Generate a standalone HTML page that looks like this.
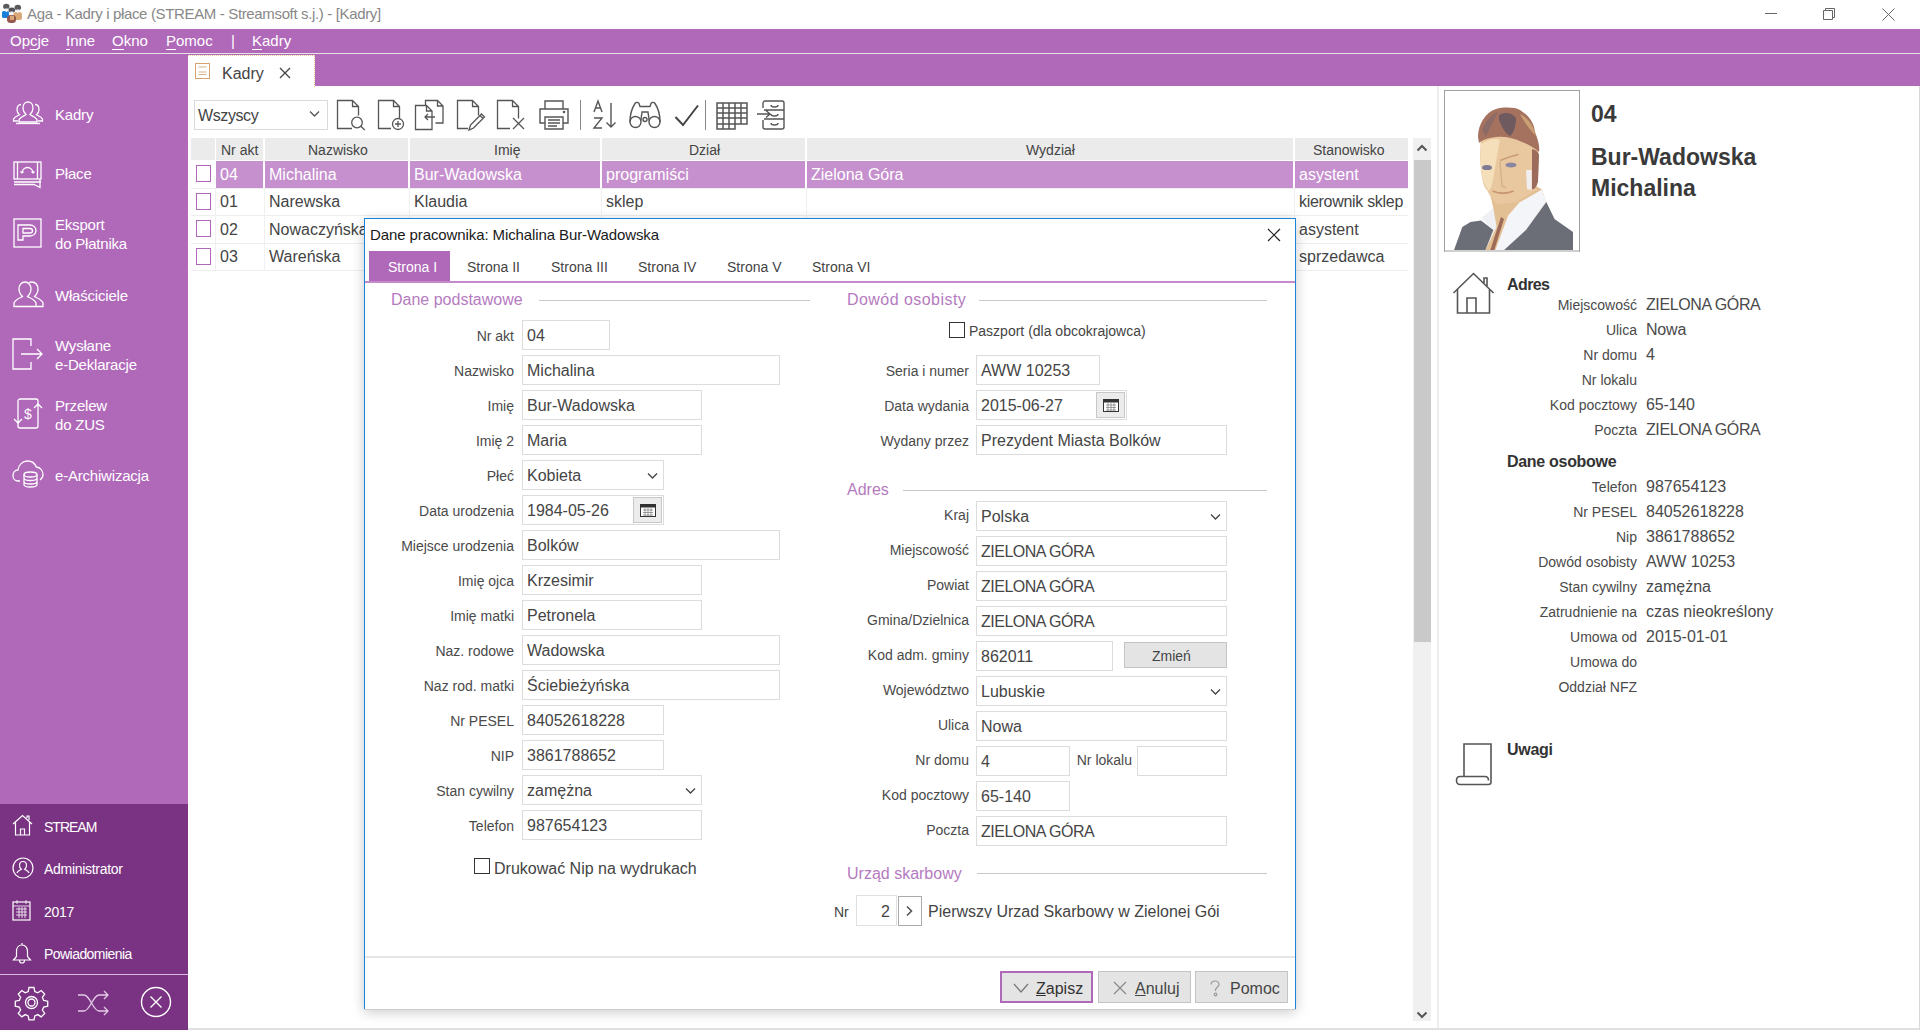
<!DOCTYPE html>
<html><head><meta charset="utf-8">
<style>
*{margin:0;padding:0;box-sizing:border-box}
html,body{width:1920px;height:1030px;overflow:hidden;background:#fff;font-family:"Liberation Sans",sans-serif;color:#333}
.a{position:absolute}
.t{position:absolute;white-space:nowrap;line-height:1}
#title{left:0;top:0;width:1920px;height:29px;background:#fff}
#menu{left:0;top:29px;width:1920px;height:24px;background:#b068b9}
#menuline{left:0;top:53px;width:1920px;height:1px;background:#e6e2e6}
#band{left:0;top:54px;width:1920px;height:32px;background:#b068b9}
#side{left:0;top:54px;width:188px;height:750px;background:#b068b9}
#side2{left:0;top:804px;width:188px;height:226px;background:#7a3383}
.mi{color:#fff;font-size:15px;top:33px}
.mi u{text-decoration:none;border-bottom:1px solid #fff}
.si{color:#fff;font-size:15px;letter-spacing:-0.2px}
.si2{color:#fff;font-size:14px;letter-spacing:-0.3px}
.ico{position:absolute;overflow:visible}
.hd{position:absolute;top:138px;height:22px;background:#ebebeb}
.ht{position:absolute;top:143px;font-size:14px;color:#444;white-space:nowrap;line-height:1}
.rt{position:absolute;font-size:16px;color:#444;white-space:nowrap;line-height:1}
.sel{color:#fff}
.cb{position:absolute;width:15px;height:17px;border:1.5px solid #b068b9;background:#fff}
.lbl{position:absolute;font-size:14px;color:#4a4a4a;white-space:nowrap;line-height:1;text-align:right}
.val{position:absolute;font-size:16px;color:#4a4a4a;white-space:nowrap;line-height:1}
.box{position:absolute;height:30px;border:1px solid #dcdcdc;background:#fff;font-size:16px;color:#454545;padding:7px 0 0 4px;white-space:nowrap;line-height:1;overflow:hidden}
.sec{position:absolute;font-size:16px;color:#b57bc0;white-space:nowrap;line-height:1}
.secl{position:absolute;height:1px;background:#c8c8c8}
.btn{position:absolute;height:30px;background:#e4e4e4;border:1px solid #c4c4c4;font-size:16px;color:#444;white-space:nowrap;line-height:1}
</style></head><body>

<!-- title bar -->
<div id="title" class="a"></div>
<svg class="ico" style="left:0px;top:0px" width="24" height="24" viewBox="0 0 24 24">
 <rect x="2" y="11" width="7" height="7" rx="1.5" fill="#1a7fd9"/>
 <ellipse cx="6.3" cy="6.5" rx="3.2" ry="2.8" fill="#5a5a5e"/>
 <path d="M5 8.5h3l-.8 3.5h-1.6z" fill="#eef0f4"/>
 <rect x="13.5" y="12" width="8.5" height="8" rx="2.5" fill="#dba877"/>
 <ellipse cx="17.8" cy="7.5" rx="3.3" ry="2.8" fill="#5a5a5e"/>
 <path d="M16.2 9.5h3.2l-1 3.5h-1.6z" fill="#eef0f4"/>
 <rect x="7" y="15" width="9" height="8" rx="3.5" fill="#94584f"/>
 <rect x="10" y="16" width="4" height="4" fill="#d9a877"/>
 <ellipse cx="11.8" cy="10" rx="3.3" ry="2.6" fill="#505055"/>
 <path d="M10.2 11.5h3.2l-1 3.8h-1.4z" fill="#eef0f4"/>
</svg>
<div class="t" style="left:27px;top:6px;font-size:15px;color:#888;letter-spacing:-0.35px">Aga - Kadry i płace (STREAM - Streamsoft s.j.) - [Kadry]</div>
<div class="a" style="left:1765px;top:13px;width:12px;height:1px;background:#666"></div>
<svg class="ico" style="left:1822px;top:7px" width="14" height="14" viewBox="0 0 14 14"><path d="M1.5 3.5h9v9h-9z M3.5 3.5v-2h9v9h-2" fill="none" stroke="#666" stroke-width="1"/></svg>
<svg class="ico" style="left:1882px;top:8px" width="13" height="13" viewBox="0 0 13 13"><path d="M0.5 0.5L12.5 12.5M12.5 0.5L0.5 12.5" stroke="#666" stroke-width="1"/></svg>

<!-- menu -->
<div id="menu" class="a"></div>
<div class="t mi" style="left:10px">Op<u>c</u>je</div>
<div class="t mi" style="left:66px"><u>I</u>nne</div>
<div class="t mi" style="left:112px"><u>O</u>kno</div>
<div class="t mi" style="left:166px"><u>P</u>omoc</div>
<div class="t mi" style="left:231px">|</div>
<div class="t mi" style="left:252px"><u>K</u>adry</div>
<div id="menuline" class="a"></div>
<div id="band" class="a"></div>
<div id="side" class="a"></div>
<div id="side2" class="a"></div>


<!-- sidebar items -->
<svg class="ico" style="left:12px;top:100px" width="32" height="27" viewBox="0 0 32 27" fill="none" stroke="#fff" stroke-width="1.3">
 <path d="M16 2c-3 0-5 2.5-5 6 0 3 1.5 5 3 6.5-1 1-6 2.5-7 5.5v2h18v-2c-1-3-6-4.5-7-5.5 1.5-1.5 3-3.5 3-6.5 0-3.5-2-6-5-6z"/>
 <path d="M9 4.5c-2.5 0-4 2-4 5 0 2.5 1 4 2.5 5.2-1 .8-5 2-6 4.3v2h4.5"/>
 <path d="M23 4.5c2.5 0 4 2 4 5 0 2.5-1 4-2.5 5.2 1 .8 5 2 6 4.3v2h-4.5"/>
 <path d="M4 23.5h24"/>
</svg>
<div class="t si" style="left:55px;top:107px">Kadry</div>

<svg class="ico" style="left:13px;top:161px" width="30" height="28" viewBox="0 0 30 28" fill="none" stroke="#fff" stroke-width="1.3">
 <rect x="1" y="1" width="27" height="17"/><path d="M4.5 1v17M24.5 1v17"/>
 <path d="M9 12c0-3 2.5-5.5 5.5-5.5S20 9 20 12M9 12l-1.5-1.5M9 12l1.5-1.5M20 12l-1.5-1.5M20 12l1.5-1.5"/>
 <path d="M1 21h27M1 23.5h20l6 3v-8"/>
</svg>
<div class="t si" style="left:55px;top:166px">Płace</div>

<svg class="ico" style="left:13px;top:218px" width="30" height="30" viewBox="0 0 30 30" fill="none" stroke="#fff" stroke-width="1.3">
 <rect x="1" y="1" width="27" height="28"/>
 <path d="M5 22V7h12c3.5 0 6 2.5 6 5.5s-2.5 5.5-6 5.5h-7v4z M10 10.5v4.5h7c1.5 0 2.5-1 2.5-2.25s-1-2.25-2.5-2.25z"/>
</svg>
<div class="t si" style="left:55px;top:217px">Eksport</div>
<div class="t si" style="left:55px;top:236px">do Płatnika</div>

<svg class="ico" style="left:12px;top:280px" width="32" height="29" viewBox="0 0 32 29" fill="none" stroke="#fff" stroke-width="1.3">
 <path d="M13 2c-3.5 0-6 3-6 7 0 3.5 1.8 6 3.5 7.5-1.2 1-7.5 3-8.5 6.5v3.5h22v-3.5c-1-3.5-7.3-5.5-8.5-6.5 1.7-1.5 3.5-4 3.5-7.5 0-4-2.5-7-6-7z"/>
 <path d="M17 2.5c1-.4 2-.5 3-.5 3.5 0 6 3 6 7 0 3.5-1.8 6-3.5 7.5 1.2 1 7.5 3 8.5 6.5v3.5h-7"/>
</svg>
<div class="t si" style="left:55px;top:288px">Właściciele</div>

<svg class="ico" style="left:12px;top:338px" width="32" height="32" viewBox="0 0 32 32" fill="none" stroke="#fff" stroke-width="1.3">
 <path d="M19 8V1H1v30h18v-7"/><path d="M9 16h21M25 11l5 5-5 5"/>
</svg>
<div class="t si" style="left:55px;top:338px">Wysłane</div>
<div class="t si" style="left:55px;top:357px">e-Deklaracje</div>

<svg class="ico" style="left:12px;top:398px" width="32" height="31" viewBox="0 0 32 31" fill="none" stroke="#fff" stroke-width="1.3">
 <path d="M6 10V3c0-1 1-2 2-2h16c1 0 2 1 2 2v3M26 21v7c0 1-1 2-2 2H8c-1 0-2-1-2-2v-3"/>
 <path d="M6 10v15M2 21l4 4 4-4M26 6v15M22 10l4-4 4 4"/>
 <text x="16" y="21" font-size="14" fill="#fff" stroke="none" text-anchor="middle" font-family="Liberation Sans">$</text>
</svg>
<div class="t si" style="left:55px;top:398px">Przelew</div>
<div class="t si" style="left:55px;top:417px">do ZUS</div>

<svg class="ico" style="left:12px;top:460px" width="32" height="28" viewBox="0 0 32 28" fill="none" stroke="#fff" stroke-width="1.3">
 <path d="M8 21H6c-3 0-5-2.5-5-5.5S3 10 6 10c.5-5 4.5-9 9.5-9 4 0 7.5 2.5 8.8 6 3.8.3 6.7 3.5 6.7 7.3 0 2.5-1.2 4.5-3 5.7"/>
 <ellipse cx="18.5" cy="14.5" rx="6.5" ry="2.5"/><path d="M12 14.5v10c0 1.5 3 2.5 6.5 2.5s6.5-1 6.5-2.5v-10M12 18c0 1.5 3 2.5 6.5 2.5S25 19.5 25 18M12 21.5c0 1.5 3 2.5 6.5 2.5s6.5-1 6.5-2.5"/>
</svg>
<div class="t si" style="left:55px;top:468px">e-Archiwizacja</div>

<!-- bottom -->
<svg class="ico" style="left:12px;top:814px" width="22" height="22" viewBox="0 0 22 22" fill="none" stroke="#fff" stroke-width="1.2">
 <path d="M1 10L10.5 1.5 20 10M3.5 8v13h14V8M8.5 21v-6h4v6M15 4V2h2v4"/>
</svg>
<div class="t si2" style="left:44px;top:820px;letter-spacing:-1px">STREAM</div>
<svg class="ico" style="left:12px;top:857px" width="22" height="22" viewBox="0 0 22 22" fill="none" stroke="#fff" stroke-width="1.2">
 <circle cx="11" cy="11" r="10"/><path d="M11 4.5c-2.2 0-3.5 1.8-3.5 4 0 1.8.8 3 1.8 3.8-.8.6-3.8 1.6-4.3 3.7M11 4.5c2.2 0 3.5 1.8 3.5 4 0 1.8-.8 3-1.8 3.8.8.6 3.8 1.6 4.3 3.7"/>
</svg>
<div class="t si2" style="left:44px;top:862px">Administrator</div>
<svg class="ico" style="left:12px;top:899px" width="20" height="22" viewBox="0 0 20 22" fill="none" stroke="#fff" stroke-width="1.2">
 <rect x="1" y="3" width="17" height="18"/><path d="M1 7h17M5 1v4M14 1v4M4 10h11M4 13h11M4 16h11M7 8v11M10 8v11M13 8v11" stroke-width=".8"/>
</svg>
<div class="t si2" style="left:44px;top:905px">2017</div>
<svg class="ico" style="left:12px;top:942px" width="20" height="22" viewBox="0 0 20 22" fill="none" stroke="#fff" stroke-width="1.2">
 <path d="M10 1v2M10 3c-3.5 0-5.5 3-5.5 6.5v5L1.5 18h17l-3-3.5v-5C15.5 6 13.5 3 10 3zM7.5 18.5c0 1.5 1 2.5 2.5 2.5s2.5-1 2.5-2.5"/>
</svg>
<div class="t si2" style="left:44px;top:947px;letter-spacing:-0.55px">Powiadomienia</div>
<div class="a" style="left:0;top:974px;width:188px;height:1px;background:#d8bcdc"></div>
<svg class="ico" style="left:15px;top:986px" width="33" height="33" viewBox="0 0 33 33" fill="none" stroke="#fff" stroke-width="1.3">
 <path d="M14 1.5h5l.8 4 3 1.3 3.4-2.3 3.5 3.5-2.3 3.4 1.3 3 4 .8v5l-4 .8-1.3 3 2.3 3.4-3.5 3.5-3.4-2.3-3 1.3-.8 4h-5l-.8-4-3-1.3-3.4 2.3-3.5-3.5 2.3-3.4-1.3-3-4-.8v-5l4-.8 1.3-3-2.3-3.4 3.5-3.5 3.4 2.3 3-1.3z"/>
 <circle cx="16.5" cy="16.5" r="6"/><circle cx="16.5" cy="16.5" r="3.5"/>
</svg>
<svg class="ico" style="left:77px;top:988px" width="33" height="30" viewBox="0 0 33 30" fill="none" stroke="#e3cbe6" stroke-width="1.3">
 <path d="M1 7h6c6 0 9 16 15 16h9M1 23h6c6 0 9-16 15-16h9M27 3l4 4-4 4M27 19l4 4-4 4"/>
</svg>
<svg class="ico" style="left:140px;top:986px" width="32" height="32" viewBox="0 0 32 32" fill="none" stroke="#fff" stroke-width="1.4">
 <circle cx="16" cy="16" r="14.5"/><path d="M10.5 10.5l11 11M21.5 10.5l-11 11"/>
</svg>

<!-- content white -->
<div class="a" style="left:188px;top:86px;width:1732px;height:944px;background:#fff"></div>

<!-- tab -->
<div class="a" style="left:188px;top:55px;width:127px;height:32px;background:#fff;border-top:1px dotted #f0c890;border-right:1px dotted #f0c890"></div>
<svg class="ico" style="left:195px;top:63px" width="16" height="17" viewBox="0 0 16 17"><rect x="0.5" y="0.5" width="14" height="15" fill="#fff" stroke="#d9a070"/><path d="M3.5 4h8M3.5 9h8M3.5 11.5h8" stroke="#d9b38a" stroke-width="1"/></svg>
<div class="t" style="left:222px;top:65.5px;font-size:16px;color:#444">Kadry</div>
<svg class="ico" style="left:279px;top:67px" width="12" height="12" viewBox="0 0 12 12"><path d="M1 1L11 11M11 1L1 11" stroke="#444" stroke-width="1.3"/></svg>


<!-- toolbar -->
<div class="box" style="left:194px;top:100px;width:134px;height:30px;border-color:#dadada;padding-top:7px;padding-left:3px;color:#444;letter-spacing:-0.4px">Wszyscy</div>
<svg class="ico" style="left:309px;top:110px" width="11" height="8" viewBox="0 0 11 8"><path d="M1 1.5l4.5 4.5 4.5-4.5" fill="none" stroke="#555" stroke-width="1.3"/></svg>
<svg class="ico" style="left:336px;top:99px" width="36" height="32" viewBox="0 0 36 32" fill="none" stroke="#555" stroke-width="1.3">
 <path d="M16 29.5H1.5V1.5h15l6 6v9M16.5 1.5v6h6"/><circle cx="21" cy="23.5" r="5.3"/><path d="M24.8 27.3l4 3.7"/>
</svg>
<svg class="ico" style="left:377px;top:99px" width="32" height="32" viewBox="0 0 32 32" fill="none" stroke="#555" stroke-width="1.3">
 <path d="M14 29.5H1.5V1.5h15l6 6v12M16.5 1.5v6h6"/><circle cx="21" cy="25" r="5.5"/><path d="M21 22v6M18 25h6"/>
</svg>
<svg class="ico" style="left:414px;top:99px" width="32" height="32" viewBox="0 0 32 32" fill="none" stroke="#555" stroke-width="1.3">
 <path d="M11.5 7V1.5h12l5.5 5.5v17h-7.5M23.5 1.5V7H29"/><path d="M1.5 6.5h11l5.5 5.5v18.5H1.5z M12.5 6.5V12H18"/><path d="M11 18h10M14 15l-3 3 3 3"/>
</svg>
<svg class="ico" style="left:456px;top:99px" width="32" height="32" viewBox="0 0 32 32" fill="none" stroke="#555" stroke-width="1.3">
 <path d="M12 29.5H1.5V1.5h15l6 6v9M16.5 1.5v6h6"/><path d="M13 31l1.5-5 11-11 3 3-11 11z M24 16.5l3 3"/>
</svg>
<svg class="ico" style="left:496px;top:99px" width="32" height="32" viewBox="0 0 32 32" fill="none" stroke="#555" stroke-width="1.3">
 <path d="M14 29.5H1.5V1.5h15l6 6v12M16.5 1.5v6h6"/><path d="M17 19l11 11M28 19L17 30"/>
</svg>
<svg class="ico" style="left:538px;top:99px" width="32" height="32" viewBox="0 0 32 32" fill="none" stroke="#555" stroke-width="1.4">
 <path d="M7 10V2h18v8M7 24H2V10h28v14h-5"/><path d="M7 18h18v12H7z M10 21h12M10 24h12M10 27h9"/><circle cx="26" cy="13" r=".6" fill="#555"/>
</svg>
<div class="a" style="left:580px;top:100px;width:1px;height:30px;background:#888"></div>
<svg class="ico" style="left:592px;top:99px" width="30" height="32" viewBox="0 0 30 32" fill="none" stroke="#555" stroke-width="1.4">
 <path d="M2 13L6 2l4 11M3.5 9h5M2 19h8L2 29h8"/><path d="M19 4v24M14.5 23.5L19 28l4.5-4.5"/>
</svg>
<svg class="ico" style="left:629px;top:100px" width="32" height="30" viewBox="0 0 32 30" fill="none" stroke="#555" stroke-width="1.4">
 <circle cx="6.5" cy="22" r="5.5"/><circle cx="25.5" cy="22" r="5.5"/><circle cx="16" cy="19.5" r="2"/>
 <path d="M1 22C1 15 3 8 6 3.5c1-1.5 3-1.5 4 0l1 3h10l1-3c1-1.5 3-1.5 4 0C29 8 31 15 31 22M12 20c0-3 1-6 1-8h6c0 2 1 5 1 8"/>
</svg>
<svg class="ico" style="left:674px;top:103px" width="26" height="26" viewBox="0 0 26 26" fill="none" stroke="#444" stroke-width="2">
 <path d="M1.5 14L9 22 24 2.5"/>
</svg>
<div class="a" style="left:705px;top:100px;width:1px;height:30px;background:#888"></div>
<svg class="ico" style="left:716px;top:102px" width="32" height="28" viewBox="0 0 32 28" fill="none" stroke="#555" stroke-width="1.5">
 <path d="M1 1h30v21h-12v5H1z M1 6h30M1 11h30M1 16h30M1 22h18M7 1v26M13 1v26M19 1v21M25 1v21"/>
</svg>
<svg class="ico" style="left:756px;top:100px" width="30" height="30" viewBox="0 0 30 30" fill="none" stroke="#555" stroke-width="1.4">
 <path d="M7 8V3c0-1 1-2 2-2h17c1 0 2 1 2 2v24c0 1-1 2-2 2H9c-1 0-2-1-2-2v-7"/>
 <path d="M8 10h20M8 19h20M1 14h13M10 10.5l4 3.5-4 3.5M15 5c0 1 1 2 3.5 2S22 6 22 5M15 23c0 1 1 2 3.5 2s3.5-1 3.5-2M15 14c0 1 1 2 3.5 2s3.5-1 3.5-2"/>
</svg>

<!-- grid header -->
<div class="hd" style="left:191px;width:24px"></div>
<div class="hd" style="left:216px;width:47px"></div>
<div class="hd" style="left:265px;width:143px"></div>
<div class="hd" style="left:410px;width:190px"></div>
<div class="hd" style="left:602px;width:203px"></div>
<div class="hd" style="left:807px;width:486px"></div>
<div class="hd" style="left:1295px;width:113px"></div>
<div class="ht" style="left:221px">Nr akt</div>
<div class="ht" style="left:308px">Nazwisko</div>
<div class="ht" style="left:494px">Imię</div>
<div class="ht" style="left:689px">Dział</div>
<div class="ht" style="left:1026px">Wydział</div>
<div class="ht" style="left:1313px">Stanowisko</div>
<!-- rows -->
<div class="a" style="left:216px;top:161px;width:47px;height:27px;background:#c690ce"></div>
<div class="a" style="left:265px;top:161px;width:143px;height:27px;background:#c690ce"></div>
<div class="a" style="left:410px;top:161px;width:190px;height:27px;background:#c690ce"></div>
<div class="a" style="left:602px;top:161px;width:203px;height:27px;background:#c690ce"></div>
<div class="a" style="left:807px;top:161px;width:486px;height:27px;background:#c690ce"></div>
<div class="a" style="left:1295px;top:161px;width:113px;height:27px;background:#c690ce"></div>
<div class="a" style="left:191px;top:188px;width:1217px;height:1px;background:#eeeeee"></div>
<div class="a" style="left:191px;top:215px;width:1217px;height:1px;background:#eeeeee"></div>
<div class="a" style="left:191px;top:243px;width:1217px;height:1px;background:#eeeeee"></div>
<div class="a" style="left:191px;top:270px;width:1217px;height:1px;background:#eeeeee"></div>
<div class="a" style="left:215px;top:188px;width:1px;height:83px;background:#f0f0f0"></div>
<div class="a" style="left:264px;top:188px;width:1px;height:83px;background:#f0f0f0"></div>
<div class="a" style="left:409px;top:188px;width:1px;height:83px;background:#f0f0f0"></div>
<div class="a" style="left:601px;top:188px;width:1px;height:83px;background:#f0f0f0"></div>
<div class="a" style="left:806px;top:188px;width:1px;height:83px;background:#f0f0f0"></div>
<div class="a" style="left:1294px;top:188px;width:1px;height:83px;background:#f0f0f0"></div>
<div class="cb" style="left:196px;top:165px"></div>
<div class="cb" style="left:196px;top:193px"></div>
<div class="cb" style="left:196px;top:220px"></div>
<div class="cb" style="left:196px;top:248px"></div>
<div class="rt sel" style="left:220px;top:167px">04</div>
<div class="rt sel" style="left:269px;top:167px">Michalina</div>
<div class="rt sel" style="left:414px;top:167px">Bur-Wadowska</div>
<div class="rt sel" style="left:606px;top:167px">programiści</div>
<div class="rt sel" style="left:811px;top:167px">Zielona Góra</div>
<div class="rt sel" style="left:1299px;top:167px">asystent</div>
<div class="rt" style="left:220px;top:194px">01</div>
<div class="rt" style="left:269px;top:194px">Narewska</div>
<div class="rt" style="left:414px;top:194px">Klaudia</div>
<div class="rt" style="left:606px;top:194px">sklep</div>
<div class="rt" style="left:1299px;top:194px;letter-spacing:-0.3px">kierownik sklep</div>
<div class="rt" style="left:220px;top:222px">02</div>
<div class="rt" style="left:269px;top:222px">Nowaczyńska</div>
<div class="rt" style="left:1299px;top:222px">asystent</div>
<div class="rt" style="left:220px;top:249px">03</div>
<div class="rt" style="left:269px;top:249px">Wareńska</div>
<div class="rt" style="left:1299px;top:249px">sprzedawca</div>

<!-- scrollbar -->
<div class="a" style="left:1413px;top:138px;width:18px;height:883px;background:#f0f0f0"></div>
<div class="a" style="left:1414px;top:160px;width:17px;height:482px;background:#c9c9c9"></div>
<svg class="ico" style="left:1416px;top:144px" width="12" height="8" viewBox="0 0 12 8"><path d="M1.5 6.5L6 2l4.5 4.5" fill="none" stroke="#555" stroke-width="2"/></svg>
<svg class="ico" style="left:1416px;top:1011px" width="12" height="8" viewBox="0 0 12 8"><path d="M1.5 1.5L6 6l4.5-4.5" fill="none" stroke="#555" stroke-width="2"/></svg>
<div class="a" style="left:1437px;top:86px;width:2px;height:944px;background:#eeeeee"></div>
<div class="a" style="left:188px;top:1028px;width:1732px;height:2px;background:#e0e0e0"></div>
<div class="a" style="left:1919px;top:86px;width:1px;height:944px;background:#d9d9d9"></div>

<!-- right panel -->
<svg class="ico" style="left:1444px;top:90px" width="137" height="163" viewBox="0 0 137 163">
 <rect x="0.5" y="0.5" width="135" height="161" fill="#fff" stroke="#a0a0a0"/>
 <path d="M46 104 L92 96 L98 99.6 L102 112 L82 140 L60.7 161 L41 161 L49.3 140 L44 128 L49.3 118 Z" fill="#e3bf94"/>
 <path d="M98 99.6 L102 112 L82 140 L60.7 161 L51 161 L64 125.7 L75.4 112.6 Z" fill="#f4f5f8"/>
 <path d="M37 128 L49.3 118 L52.6 137 L41 161 L49.3 140 Z" fill="#eef0f4"/>
 <path d="M57 127 L60 129 L50 161 L46 161 Z" fill="#9e6a58"/>
 <path d="M9.7 161 L18.3 137 L26.5 132 L37 130.6 L49.3 140 L41 161 Z" fill="#6b6d77"/>
 <path d="M59 161 L82 140 L102.3 112 L110.5 129 L129 142 L129 161 Z" fill="#6b6d77"/>
 <path d="M37 44 C36 62 36 72 37 80 C38 90 40 98 43 100 C46 106 50 112 53 114 L71 112.6 L92 100 C94 90 95 76 94 62 C94 50 80 42 66 40 C54 38 44 40 37 44Z" fill="#e9c89f"/>
 <path d="M37 54 C44 49 52 48 56 50 C54 60 52 72 50 84 C48 96 46 102 44 100 C40 94 37 86 37 78 Z" fill="#f4dfba"/>
 <path d="M34 47 C34 34 42 22 52 19 C60 17 70 17 76 20 C84 25 90 32 91 42 C94 50 96 56 95 62 C90 58 84 54 78 52 C70 48 60 46 52 47 C44 48 38 50 35 53 Z" fill="#a4725f"/>
 <path d="M55 25 C60 22 68 22 72 28 C72 36 70 42 66 46 C62 44 58 38 55 30 Z" fill="#6f5a60"/>
 <path d="M38 40 C42 30 48 24 54 22 C50 30 46 38 42 46Z" fill="#8c6a66"/>
 <path d="M76 24 C84 28 90 36 92 46 C86 40 80 32 76 24Z" fill="#caa074"/>
 <path d="M88 59 C92 60 95 62 95 66 L94 92 C92 98 90 100 88 99 Z" fill="#9c6b5c"/>
 <path d="M82 80 L87.6 80 L87.6 100 L83 99 Z" fill="#f0eeee"/>
 <path d="M56 70.5 C62 68 68 66 74.5 64.5" stroke="#c99a74" stroke-width="1.4" fill="none"/>
 <ellipse cx="43" cy="77.5" rx="5" ry="2.6" fill="#7e7a92"/><ellipse cx="67" cy="75" rx="5.5" ry="2.5" fill="#8a87a2"/>
 <path d="M56 72 L58 96 L62 98" stroke="#d6b08a" stroke-width="1.4" fill="none"/>
 <path d="M48.5 101 C56 104 63 104 69.7 101" stroke="#c9966f" stroke-width="1.8" fill="none"/>
 <rect x="1" y="160" width="134" height="2" fill="#cfcfcf"/>
</svg>
<div class="t" style="left:1591px;top:102.9px;font-size:23px;font-weight:bold;color:#3a3a3a">04</div>
<div class="t" style="left:1591px;top:145.5px;font-size:23px;font-weight:bold;color:#3a3a3a">Bur-Wadowska</div>
<div class="t" style="left:1591px;top:176.5px;font-size:23px;font-weight:bold;color:#3a3a3a">Michalina</div>
<svg class="ico" style="left:1452px;top:272px" width="43" height="42" viewBox="0 0 43 42" fill="none" stroke="#555" stroke-width="1.6"><path d="M1.5 21L21.5 1.5 41.5 21M5.5 17v24h32V17M15 41V26h9v15M32 11V6h3v8"/></svg>
<div class="t" style="left:1507px;top:276.5px;font-size:16px;font-weight:bold;color:#333;letter-spacing:-0.6px">Adres</div>
<div class="lbl" style="right:283px;top:298.1px">Miejscowość</div>
<div class="val" style="left:1646px;top:296.5px;letter-spacing:-0.4px">ZIELONA GÓRA</div>
<div class="lbl" style="right:283px;top:323.1px">Ulica</div>
<div class="val" style="left:1646px;top:321.5px;letter-spacing:-0.2px">Nowa</div>
<div class="lbl" style="right:283px;top:348.1px">Nr domu</div>
<div class="val" style="left:1646px;top:346.5px;letter-spacing:-0.2px">4</div>
<div class="lbl" style="right:283px;top:373.1px">Nr lokalu</div>
<div class="lbl" style="right:283px;top:398.1px">Kod pocztowy</div>
<div class="val" style="left:1646px;top:396.5px;letter-spacing:-0.2px">65-140</div>
<div class="lbl" style="right:283px;top:423.1px">Poczta</div>
<div class="val" style="left:1646px;top:421.5px;letter-spacing:-0.4px">ZIELONA GÓRA</div>
<div class="t" style="left:1507px;top:454.0px;font-size:16px;font-weight:bold;color:#333;letter-spacing:-0.3px">Dane osobowe</div>
<div class="lbl" style="right:283px;top:480.1px">Telefon</div>
<div class="val" style="left:1646px;top:478.5px">987654123</div>
<div class="lbl" style="right:283px;top:505.1px">Nr PESEL</div>
<div class="val" style="left:1646px;top:503.5px">84052618228</div>
<div class="lbl" style="right:283px;top:530.1px">Nip</div>
<div class="val" style="left:1646px;top:528.5px">3861788652</div>
<div class="lbl" style="right:283px;top:555.1px">Dowód osobisty</div>
<div class="val" style="left:1646px;top:553.5px">AWW 10253</div>
<div class="lbl" style="right:283px;top:580.1px">Stan cywilny</div>
<div class="val" style="left:1646px;top:578.5px">zamężna</div>
<div class="lbl" style="right:283px;top:605.1px">Zatrudnienie na</div>
<div class="val" style="left:1646px;top:603.5px">czas nieokreślony</div>
<div class="lbl" style="right:283px;top:630.1px">Umowa od</div>
<div class="val" style="left:1646px;top:628.5px">2015-01-01</div>
<div class="lbl" style="right:283px;top:655.1px">Umowa do</div>
<div class="lbl" style="right:283px;top:680.1px">Oddział NFZ</div>
<svg class="ico" style="left:1455px;top:742px" width="38" height="44" viewBox="0 0 38 44" fill="none" stroke="#555" stroke-width="1.6"><path d="M9 34V2h27v38c0 1.5-1 2.5-2.5 2.5H5c-2 0-3.5-1.5-3.5-4s1.5-4 3.5-4h25c2 0 3.5 1.5 3.5 4"/></svg>
<div class="t" style="left:1507px;top:741.5px;font-size:16px;font-weight:bold;color:#333;letter-spacing:-0.3px">Uwagi</div>
<!-- dialog -->
<div class="a" style="left:364px;top:218px;width:932px;height:791px;background:#fff;border:1px solid #1883d7;border-bottom:0;box-shadow:0 1px 0 #cfcfcf,0 3px 12px rgba(0,0,0,0.22)"></div>
<div class="t" style="left:370px;top:227.3px;font-size:15px;color:#1a1a1a;letter-spacing:-0.1px">Dane pracownika: Michalina Bur-Wadowska</div>
<svg class="ico" style="left:1267px;top:228px" width="14" height="14" viewBox="0 0 14 14"><path d="M1 1L13 13M13 1L1 13" stroke="#222" stroke-width="1.2"/></svg>
<div class="a" style="left:369px;top:251px;width:81px;height:32px;background:#b068b9"></div>
<div class="a" style="left:365px;top:281px;width:930px;height:2px;background:#c58acc"></div>
<div class="t" style="left:388px;top:260.1px;font-size:14px;color:#fff">Strona I</div>
<div class="t" style="left:467px;top:260.1px;font-size:14px;color:#444">Strona II</div>
<div class="t" style="left:551px;top:260.1px;font-size:14px;color:#444">Strona III</div>
<div class="t" style="left:638px;top:260.1px;font-size:14px;color:#444">Strona IV</div>
<div class="t" style="left:727px;top:260.1px;font-size:14px;color:#444">Strona V</div>
<div class="t" style="left:812px;top:260.1px;font-size:14px;color:#444">Strona VI</div>
<div class="sec" style="left:391px;top:291.5px">Dane podstawowe</div>
<div class="secl" style="left:539px;top:300px;width:271px"></div>
<div class="sec" style="left:847px;top:291.5px;letter-spacing:0.45px">Dowód osobisty</div>
<div class="secl" style="left:979px;top:300px;width:288px"></div>
<div class="sec" style="left:847px;top:481.5px">Adres</div>
<div class="secl" style="left:903px;top:490px;width:364px"></div>
<div class="sec" style="left:847px;top:865.5px">Urząd skarbowy</div>
<div class="secl" style="left:977px;top:873px;width:290px"></div>
<div class="lbl" style="right:1406px;top:329.1px">Nr akt</div>
<div class="box" style="left:522px;top:320px;width:88px">04</div>
<div class="lbl" style="right:1406px;top:364.1px">Nazwisko</div>
<div class="box" style="left:522px;top:355px;width:258px">Michalina</div>
<div class="lbl" style="right:1406px;top:399.1px">Imię</div>
<div class="box" style="left:522px;top:390px;width:180px">Bur-Wadowska</div>
<div class="lbl" style="right:1406px;top:434.1px">Imię 2</div>
<div class="box" style="left:522px;top:425px;width:180px">Maria</div>
<div class="lbl" style="right:1406px;top:469.1px">Płeć</div>
<div class="box" style="left:522px;top:460px;width:142px">Kobieta</div>
<svg class="ico" style="left:647px;top:472px" width="11" height="8" viewBox="0 0 11 8"><path d="M1 1.5l4.5 4.5 4.5-4.5" fill="none" stroke="#444" stroke-width="1.3"/></svg>
<div class="lbl" style="right:1406px;top:504.1px">Data urodzenia</div>
<div class="box" style="left:522px;top:495px;width:142px">1984-05-26</div>
<div class="a" style="left:633px;top:497px;width:29px;height:26px;background:#ececec;border:1px solid #c8c8c8"></div>
<svg class="ico" style="left:640px;top:504px" width="16" height="13" viewBox="0 0 16 13"><rect x="0.5" y="0.5" width="15" height="12" fill="#fff" stroke="#333"/><rect x="0.5" y="0.5" width="15" height="3" fill="#333"/><path d="M3 6h10M3 8.5h10M3 11h10M5 4v8M8 4v8M11 4v8" stroke="#777" stroke-width=".7"/></svg>
<div class="lbl" style="right:1406px;top:539.1px">Miejsce urodzenia</div>
<div class="box" style="left:522px;top:530px;width:258px">Bolków</div>
<div class="lbl" style="right:1406px;top:574.1px">Imię ojca</div>
<div class="box" style="left:522px;top:565px;width:180px">Krzesimir</div>
<div class="lbl" style="right:1406px;top:609.1px">Imię matki</div>
<div class="box" style="left:522px;top:600px;width:180px">Petronela</div>
<div class="lbl" style="right:1406px;top:644.1px">Naz. rodowe</div>
<div class="box" style="left:522px;top:635px;width:258px">Wadowska</div>
<div class="lbl" style="right:1406px;top:679.1px">Naz rod. matki</div>
<div class="box" style="left:522px;top:670px;width:258px">Ściebieżyńska</div>
<div class="lbl" style="right:1406px;top:714.1px">Nr PESEL</div>
<div class="box" style="left:522px;top:705px;width:142px">84052618228</div>
<div class="lbl" style="right:1406px;top:749.1px">NIP</div>
<div class="box" style="left:522px;top:740px;width:142px">3861788652</div>
<div class="lbl" style="right:1406px;top:784.1px">Stan cywilny</div>
<div class="box" style="left:522px;top:775px;width:180px">zamężna</div>
<svg class="ico" style="left:685px;top:787px" width="11" height="8" viewBox="0 0 11 8"><path d="M1 1.5l4.5 4.5 4.5-4.5" fill="none" stroke="#444" stroke-width="1.3"/></svg>
<div class="lbl" style="right:1406px;top:819.1px">Telefon</div>
<div class="box" style="left:522px;top:810px;width:180px">987654123</div>
<div class="a" style="left:474px;top:858px;width:16px;height:16px;border:1px solid #333;background:#fff"></div>
<div class="t" style="left:494px;top:860.5px;font-size:16px;color:#444">Drukować Nip na wydrukach</div>
<div class="a" style="left:949px;top:322px;width:16px;height:16px;border:1px solid #333;background:#fff"></div>
<div class="t" style="left:969px;top:324.1px;font-size:14px;color:#444">Paszport (dla obcokrajowca)</div>
<div class="lbl" style="right:951px;top:364.1px">Seria i numer</div>
<div class="box" style="left:976px;top:355px;width:124px">AWW 10253</div>
<div class="lbl" style="right:951px;top:399.1px">Data wydania</div>
<div class="box" style="left:976px;top:390px;width:151px">2015-06-27</div>
<div class="a" style="left:1096px;top:392px;width:29px;height:26px;background:#ececec;border:1px solid #c8c8c8"></div>
<svg class="ico" style="left:1103px;top:399px" width="16" height="13" viewBox="0 0 16 13"><rect x="0.5" y="0.5" width="15" height="12" fill="#fff" stroke="#333"/><rect x="0.5" y="0.5" width="15" height="3" fill="#333"/><path d="M3 6h10M3 8.5h10M3 11h10M5 4v8M8 4v8M11 4v8" stroke="#777" stroke-width=".7"/></svg>
<div class="lbl" style="right:951px;top:434.1px">Wydany przez</div>
<div class="box" style="left:976px;top:425px;width:251px">Prezydent Miasta Bolków</div>
<div class="lbl" style="right:951px;top:508.1px">Kraj</div>
<div class="box" style="left:976px;top:501px;width:251px">Polska</div>
<svg class="ico" style="left:1210px;top:513px" width="11" height="8" viewBox="0 0 11 8"><path d="M1 1.5l4.5 4.5 4.5-4.5" fill="none" stroke="#444" stroke-width="1.3"/></svg>
<div class="lbl" style="right:951px;top:543.1px">Miejscowość</div>
<div class="box" style="left:976px;top:536px;width:251px"><span style="letter-spacing:-0.5px">ZIELONA GÓRA</span></div>
<div class="lbl" style="right:951px;top:578.1px">Powiat</div>
<div class="box" style="left:976px;top:571px;width:251px"><span style="letter-spacing:-0.5px">ZIELONA GÓRA</span></div>
<div class="lbl" style="right:951px;top:613.1px">Gmina/Dzielnica</div>
<div class="box" style="left:976px;top:606px;width:251px"><span style="letter-spacing:-0.5px">ZIELONA GÓRA</span></div>
<div class="lbl" style="right:951px;top:648.1px">Kod adm. gminy</div>
<div class="box" style="left:976px;top:641px;width:137px">862011</div>
<div class="btn" style="left:1124px;top:642px;width:103px;height:26px"></div>
<div class="t" style="left:1152px;top:649.1px;font-size:14px;color:#444">Zmień</div>
<div class="lbl" style="right:951px;top:683.1px">Województwo</div>
<div class="box" style="left:976px;top:676px;width:251px">Lubuskie</div>
<svg class="ico" style="left:1210px;top:688px" width="11" height="8" viewBox="0 0 11 8"><path d="M1 1.5l4.5 4.5 4.5-4.5" fill="none" stroke="#444" stroke-width="1.3"/></svg>
<div class="lbl" style="right:951px;top:718.1px">Ulica</div>
<div class="box" style="left:976px;top:711px;width:251px">Nowa</div>
<div class="lbl" style="right:951px;top:753.1px">Nr domu</div>
<div class="box" style="left:976px;top:746px;width:94px">4</div>
<div class="lbl" style="right:788px;top:753.1px">Nr lokalu</div>
<div class="box" style="left:1137px;top:746px;width:90px"></div>
<div class="lbl" style="right:951px;top:788.1px">Kod pocztowy</div>
<div class="box" style="left:976px;top:781px;width:94px">65-140</div>
<div class="lbl" style="right:951px;top:823.1px">Poczta</div>
<div class="box" style="left:976px;top:816px;width:251px"><span style="letter-spacing:-0.5px">ZIELONA GÓRA</span></div>
<div class="t" style="left:834px;top:905.1px;font-size:14px;color:#444">Nr</div>
<div class="box" style="left:856px;top:895px;width:41px;height:31px;border-color:#e0e0e0;text-align:right;padding-right:6px;padding-top:8px">2</div>
<div class="a" style="left:898px;top:896px;width:24px;height:30px;border:1px solid #aaa;background:#fff"></div>
<svg class="ico" style="left:905px;top:905px" width="9" height="12" viewBox="0 0 9 12"><path d="M2 1.5l4.5 4.5L2 10.5" fill="none" stroke="#555" stroke-width="1.6"/></svg>
<div class="a" style="left:928px;top:902.5px;width:300px;height:15px;overflow:hidden"><div class="t" style="left:0;top:1px;font-size:16px;color:#444">Pierwszy Urzad Skarbowy w Zielonej Gói</div></div>
<div class="a" style="left:365px;top:956px;width:930px;height:2px;background:#e6e6e6"></div>
<div class="btn" style="left:1000px;top:971px;width:93px;height:32px;border:2px solid #b068b9"></div>
<div class="btn" style="left:1098px;top:971px;width:93px;height:32px"></div>
<div class="btn" style="left:1195px;top:971px;width:93px;height:32px"></div>
<svg class="ico" style="left:1013px;top:982px" width="16" height="12" viewBox="0 0 16 12"><path d="M1 2l7 8 7-8" fill="none" stroke="#777" stroke-width="1.2"/></svg>
<div class="t" style="left:1036px;top:980.5px;font-size:16px;color:#333"><u style="text-decoration:underline">Z</u>apisz</div>
<svg class="ico" style="left:1113px;top:981px" width="14" height="14" viewBox="0 0 14 14"><path d="M1 1L13 13M13 1L1 13" stroke="#888" stroke-width="1.2"/></svg>
<div class="t" style="left:1135px;top:980.5px;font-size:16px;color:#444"><u style="text-decoration:underline">A</u>nuluj</div>
<svg class="ico" style="left:1208px;top:980px" width="14" height="17" viewBox="0 0 14 17" fill="none" stroke="#9a9a9a" stroke-width="1.2"><path d="M3 4.5C3 2.5 4.8 1 7 1s4 1.5 4 3.5c0 2.2-3.5 2.8-3.5 5.5v1"/><circle cx="7.5" cy="14.5" r="1.3"/></svg>
<div class="t" style="left:1230px;top:980.5px;font-size:16px;color:#444">Pomoc</div>
</body></html>
